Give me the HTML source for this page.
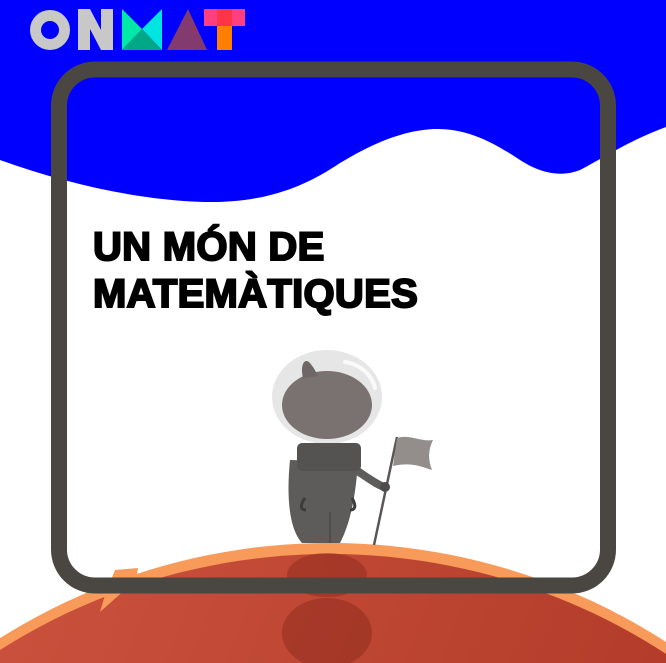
<!DOCTYPE html>
<html><head><meta charset="utf-8"><style>
html,body{margin:0;padding:0;}
body{width:666px;height:663px;overflow:hidden;position:relative;background:#fff;}
svg{position:absolute;left:0;top:0;overflow:hidden;}
.t{position:absolute;left:93px;font-family:"Liberation Sans",Arial,sans-serif;font-weight:bold;font-size:40px;color:#000;-webkit-text-stroke:2px #000;line-height:1;letter-spacing:0.3px;}
</style></head><body>
<svg width="666" height="663" viewBox="0 0 666 663">
<defs>
<linearGradient id="pl" x1="0" y1="0" x2="1" y2="0.4">
<stop offset="0" stop-color="#d45a45"/><stop offset="1" stop-color="#a4301e"/>
</linearGradient>
</defs>
<path d="M0 0H666V127C630 140 600 160 580 170C565 176 545 176 520 160C490 140 465 128 433 129C400 131 370 145 340 163C300 190 260 203 204 202C140 200 70 185 0 160Z" fill="#0000ff"/>
<circle cx="330" cy="1163" r="620" fill="#f79a5a"/>
<circle cx="330" cy="1169" r="615" fill="url(#pl)"/>
<ellipse cx="327" cy="633" rx="45" ry="35" fill="#8c2a1c" opacity="0.5"/>
<ellipse cx="327" cy="575" rx="40" ry="22" fill="#8c2a1c" opacity="0.5"/>
<path d="M115 570L138 568L136 580L100 612L105 595Z" fill="#f79a5a"/>
<rect x="59" y="69.5" width="549" height="516" rx="36" fill="none" stroke="#4a4642" stroke-width="16"/>
<line x1="374" y1="545" x2="397" y2="437" stroke="#5a5655" stroke-width="2.5"/>
<path d="M397 438C410 434 420 442 433 440C428 450 428 460 432 470C420 466 410 462 393 466Z" fill="#938d8c"/>
<path d="M290 460C286 500 290 530 302 543H340C352 520 356 490 358 462Z" fill="#5e5c5b"/>
<path d="M356 470C368 478 376 484 384 487" stroke="#5e5c5b" stroke-width="8" stroke-linecap="round"/>
<circle cx="385" cy="487" r="5" fill="#4e4c4b"/>
<ellipse cx="327" cy="397" rx="55" ry="47" fill="#e6e6e6"/>
<ellipse cx="327" cy="405" rx="45" ry="34" fill="#7a7270"/>
<path d="M303 378C300 366 304 358 309 362C313 366 316 372 318 376Z" fill="#6e6766"/>
<path d="M345 362C360 364 372 375 375 388" stroke="#fafafa" stroke-width="4" fill="none" stroke-linecap="round"/>
<rect x="297" y="443" width="64" height="28" rx="5" fill="#555352"/>
<path d="M305 498C300 505 300 510 306 510" stroke="#3e3c3b" stroke-width="3" fill="none"/>
<path d="M352 498C356 505 356 510 350 510" stroke="#3e3c3b" stroke-width="3" fill="none"/>
<line x1="330" y1="512" x2="330" y2="543" stroke="#4a4847" stroke-width="1.5"/>
<circle cx="50" cy="30" r="14.5" fill="none" stroke="#c8c8c8" stroke-width="11"/>
<path d="M78 9H90L101 30V9H113V50H101L90 29V50H78Z" fill="#c8c8c8"/>
<path d="M122 9L142 29L122 50Z" fill="#00e8a8"/>
<path d="M162 9L142 29L162 50Z" fill="#00e5e0"/>
<path d="M122 50L142 29L162 50Z" fill="#00a888"/>
<path d="M188 9L207 50H167Z" fill="#833a6e"/>
<rect x="217" y="25" width="15" height="25" fill="#ff8000"/>
<rect x="204" y="9" width="41" height="17" fill="#ff3f7f"/>
<rect x="217" y="9" width="15" height="17" fill="#ff3448"/>
</svg>
<div class="t" style="top:227px">UN MÓN DE</div>
<div class="t" style="top:274px">MATEMÀTIQUES</div>
</body></html>
